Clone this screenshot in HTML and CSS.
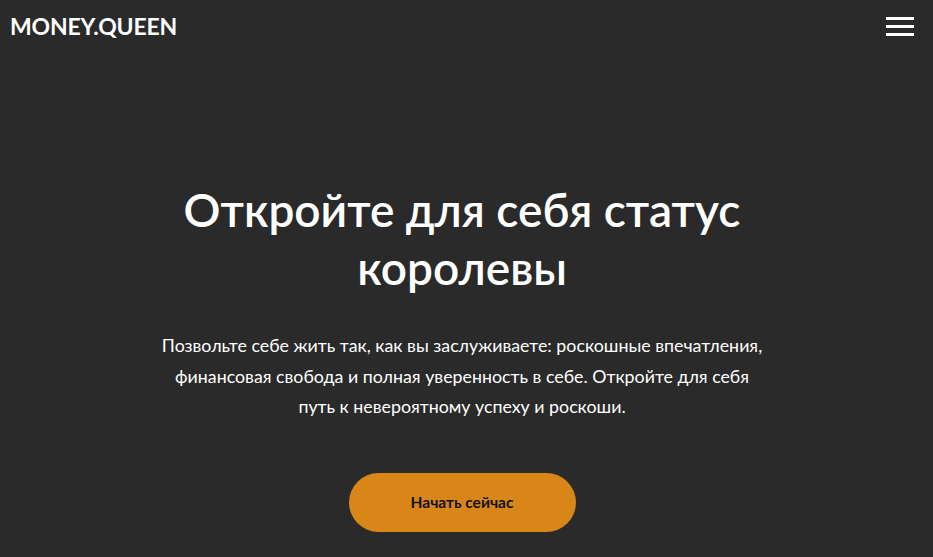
FILE: index.html
```html
<!DOCTYPE html>
<html lang="ru">
<head>
<meta charset="utf-8">
<title>MONEY.QUEEN</title>
<link rel="stylesheet" href="styles.css">
</head>
<body>
<header class="topbar">
  <a class="logo" href="#">MONEY.QUEEN</a>
  <button class="burger" aria-label="Меню">
    <span></span><span></span><span></span>
  </button>
</header>
<main class="hero">
  <h1 class="hero-title">Откройте для себя статус королевы</h1>
  <p class="hero-text">Позвольте себе жить так, как вы заслуживаете: роскошные впечатления, финансовая свобода и полная уверенность в себе. Откройте для себя путь к невероятному успеху и роскоши.</p>
  <a class="cta" href="#">Начать сейчас</a>
</main>
</body>
</html>
```

FILE: styles.css
```css
* { box-sizing: border-box; }

html, body {
  margin: 0;
  height: 100%;
}

body {
  background: #2a2a2a;
  color: #fff;
  font-family: "Lato", "Noto Sans", sans-serif;
  overflow: hidden;
}

.topbar {
  display: flex;
  justify-content: space-between;
  align-items: center;
  padding: 8px 19px 0 10px;
  height: 44px;
}

.logo {
  color: #fff;
  text-decoration: none;
  font-family: "Lato", sans-serif;
  font-weight: 700;
  font-size: 23px;
  letter-spacing: -0.2px;
}

.burger {
  display: flex;
  flex-direction: column;
  gap: 5px;
  background: none;
  border: 0;
  padding: 0;
  cursor: pointer;
}

.burger span {
  display: block;
  width: 28px;
  height: 3px;
  background: #fff;
}

.hero {
  display: flex;
  flex-direction: column;
  align-items: center;
  text-align: center;
  padding: 137px 0 0;
  margin-right: 9px;
}

.hero-title {
  margin: 0;
  max-width: 600px;
  font-size: 46px;
  font-weight: 600;
  line-height: 58px;
}

.hero-text {
  margin: 33px 0 0;
  max-width: 610px;
  font-size: 17.8px;
  font-weight: 400;
  line-height: 30.5px;
}

.cta {
  margin-top: 51px;
  display: flex;
  align-items: center;
  justify-content: center;
  width: 227px;
  height: 59px;
  border-radius: 30px;
  background: #d98619;
  color: #111;
  text-decoration: none;
  font-weight: 700;
  font-size: 15.5px;
}
```
